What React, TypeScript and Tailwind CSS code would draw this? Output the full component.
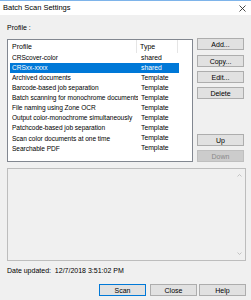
import React from 'react';

const rows: { name: string; type: string; selected?: boolean }[] = [
  { name: 'CRScover-color', type: 'shared' },
  { name: 'CRSxx-xxxx', type: 'shared', selected: true },
  { name: 'Archived documents', type: 'Template' },
  { name: 'Barcode-based job separation', type: 'Template' },
  { name: 'Batch scanning for monochrome documents', type: 'Template' },
  { name: 'File naming using Zone OCR', type: 'Template' },
  { name: 'Output color-monochrome simultaneously', type: 'Template' },
  { name: 'Patchcode-based job separation', type: 'Template' },
  { name: 'Scan color documents at one time', type: 'Template' },
  { name: 'Searchable PDF', type: 'Template' },
];

const Btn = ({ label, disabled, primary, className = '' }: { label: string; disabled?: boolean; primary?: boolean; className?: string }) => (
  <div
    className={
      'h-[12px] w-[47px] flex items-center justify-center border text-[7px] leading-none ' +
      (disabled
        ? 'bg-[#cccccc] border-[#bfbfbf] text-[#8a8a8a] '
        : primary
        ? 'bg-[#e1e1e1] border-[#0078d7] text-black '
        : 'bg-[#e1e1e1] border-[#adadad] text-black ') +
      className
    }
  >
    {label}
  </div>
);

export default function App() {
  return (
    <div
      className="w-[251px] h-[300px] bg-[#f0f0f0] overflow-hidden text-black"
      style={{ fontFamily: '"Liberation Sans", Arial, sans-serif' }}
    >
      {/* title bar */}
      <div className="h-[15px] bg-white border-t border-[#7eb4ea] flex items-center justify-between pl-[3px] pr-[5px]">
        <span className="text-[7.5px] leading-none">Batch Scan Settings</span>
        <svg width="7" height="7" viewBox="0 0 7 7" className="mt-[1px]">
          <path d="M0.5 0.5L6.5 6.5M6.5 0.5L0.5 6.5" stroke="#333" strokeWidth="0.9" />
        </svg>
      </div>

      <div className="pl-[7px] pr-[5px]">
        <div className="h-[23px] flex items-center text-[7px] leading-none pt-[1px]">Profile :</div>

        <div className="flex gap-[4px]">
          {/* list view */}
          <div className="mt-[1px] w-[186px] h-[123px] bg-white border border-[#828790] pl-[2px] overflow-hidden">
            <div className="h-[13px] flex text-[7px] leading-none">
              <div className="w-[127px] border-r border-[#e5e5e5] flex items-center pl-[2px]">Profile</div>
              <div className="w-[41px] border-r border-[#e5e5e5] flex items-center pl-[3px]">Type</div>
            </div>
            {rows.map((r) => (
              <div
                key={r.name}
                className={
                  'h-[10.1px] w-[169px] flex items-center text-[6.6px] leading-none ' +
                  (r.selected ? 'bg-[#0078d7] text-white' : '')
                }
              >
                <div className="w-[128px] pl-[2px] pr-[1px] whitespace-nowrap overflow-hidden tracking-[-0.05px]">{r.name}</div>
                <div className="pl-[3px] text-[6.8px]">{r.type}</div>
              </div>
            ))}
          </div>

          {/* side buttons */}
          <div className="flex flex-col h-[124px]">
            <Btn label="Add..." />
            <Btn label="Copy..." className="mt-[5px]" />
            <Btn label="Edit..." className="mt-[4px]" />
            <Btn label="Delete" className="mt-[4px]" />
            <div className="flex-1" />
            <Btn label="Up" />
            <Btn label="Down" disabled className="mt-[4px]" />
          </div>
        </div>

        {/* description box */}
        <div className="mt-[6px] w-[239px] h-[93px] border border-[#bdbdbd] bg-[#f0f0f0] flex justify-end pr-[3px] py-[5px]">
          <div className="flex flex-col justify-between">
            <svg width="5" height="3" viewBox="0 0 5 3">
              <path d="M0.5 2.5L2.5 0.5L4.5 2.5" stroke="#b8b8b8" strokeWidth="0.8" fill="none" />
            </svg>
            <svg width="5" height="3" viewBox="0 0 5 3">
              <path d="M0.5 0.5L2.5 2.5L4.5 0.5" stroke="#b8b8b8" strokeWidth="0.8" fill="none" />
            </svg>
          </div>
        </div>

        <div className="h-[19px] flex items-center text-[7px] leading-none">
          Date updated:&nbsp; 12/7/2018 3:51:02 PM
        </div>

        <div className="mt-[4px] flex justify-end gap-[3px]">
          <Btn label="Scan" primary />
          <Btn label="Close" className="mr-[-1px] ml-[1px]" />
          <Btn label="Help" />
        </div>
      </div>
    </div>
  );
}
